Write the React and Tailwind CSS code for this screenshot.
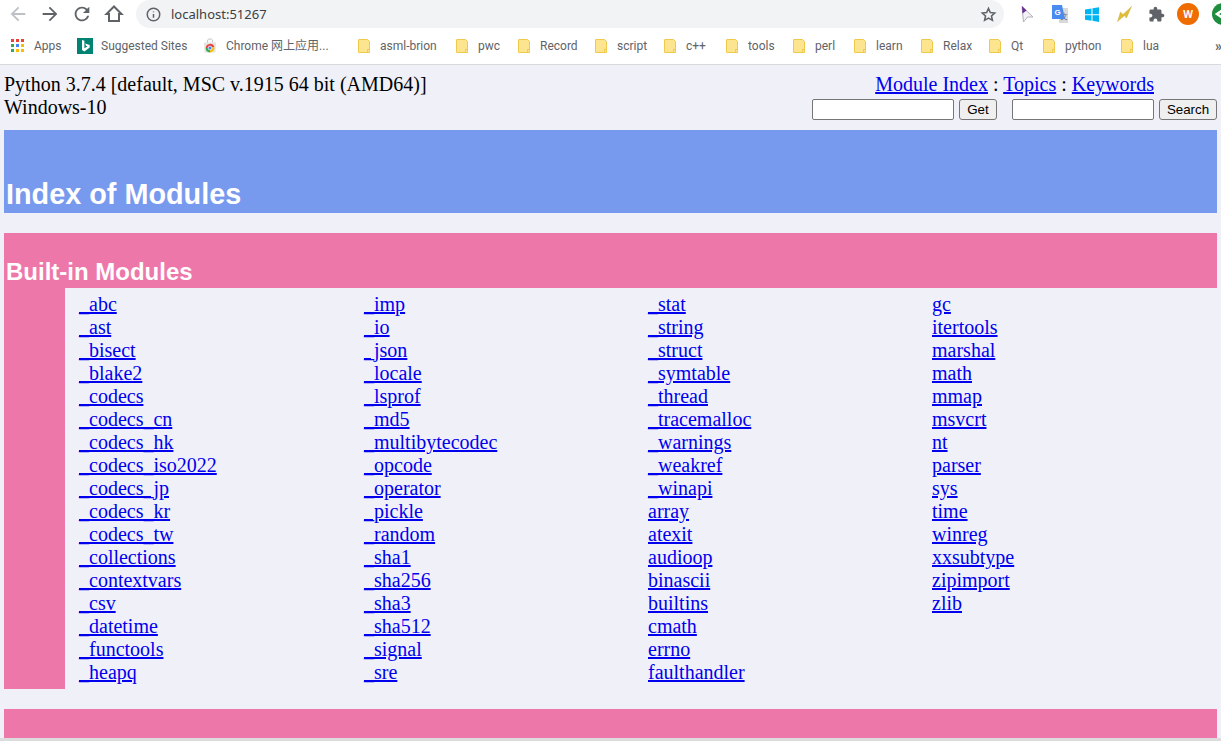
const bookmarks = [
  ['asml-brion', 'w-[98px]'],
  ['pwc', 'w-[62px]'],
  ['Record', 'w-[77px]'],
  ['script', 'w-[69px]'],
  ['c++', 'w-[62px]'],
  ['tools', 'w-[67px]'],
  ['perl', 'w-[61px]'],
  ['learn', 'w-[67px]'],
  ['Relax', 'w-[68px]'],
  ['Qt', 'w-[54px]'],
  ['python', 'w-[78px]'],
  ['lua', 'w-[60px]'],
];

const columns = [
  { w: 'w-[285px]', items: ['_abc', '_ast', '_bisect', '_blake2', '_codecs', '_codecs_cn', '_codecs_hk', '_codecs_iso2022', '_codecs_jp', '_codecs_kr', '_codecs_tw', '_collections', '_contextvars', '_csv', '_datetime', '_functools', '_heapq'] },
  { w: 'w-[284px]', items: ['_imp', '_io', '_json', '_locale', '_lsprof', '_md5', '_multibytecodec', '_opcode', '_operator', '_pickle', '_random', '_sha1', '_sha256', '_sha3', '_sha512', '_signal', '_sre'] },
  { w: 'w-[284px]', items: ['_stat', '_string', '_struct', '_symtable', '_thread', '_tracemalloc', '_warnings', '_weakref', '_winapi', 'array', 'atexit', 'audioop', 'binascii', 'builtins', 'cmath', 'errno', 'faulthandler'] },
  { w: 'w-[270px]', items: ['gc', 'itertools', 'marshal', 'math', 'mmap', 'msvcrt', 'nt', 'parser', 'sys', 'time', 'winreg', 'xxsubtype', 'zipimport', 'zlib'] },
];

const NavIcon = ({ d, className }) => (
  <svg width="22" height="22" viewBox="0 0 24 24" fill="currentColor" className={`shrink-0 ${className}`}>
    <path d={d} />
  </svg>
);

const HomeIcon = () => (
  <svg width="22" height="22" viewBox="0 0 22 22" className="shrink-0 ml-[10px] mt-[3px]">
    <path d="M11 3.500 L3.500 11 H6 V18 H16 V11 H18.500 Z" fill="none" stroke="#5f6368" strokeWidth="2" strokeLinejoin="miter" />
  </svg>
);

const Folder = () => (
  <svg width="12" height="14" viewBox="0 0 12 14" className="shrink-0">
    <path d="M1 .5h8.500l2 2v11H1a.5.5 0 0 1-.5-.5V1A.5.5 0 0 1 1 .5z" fill="#fde58f" stroke="#efc94c" />
    <rect x="9.500" y="10.500" width="2" height="3" fill="#fde58f" stroke="#efc94c" strokeWidth="0.8" />
  </svg>
);

const AppsIcon = () => {
  const dots = ['#ea4335', '#ea4335', '#ea4335', '#34a853', '#4285f4', '#fbbc05', '#34a853', '#fbbc05', '#fbbc05'];
  return (
    <svg width="13" height="13" viewBox="0 0 13 13">
      {dots.map((c, i) => (
        <rect key={i} x={(i % 3) * 5} y={Math.floor(i / 3) * 5} width="3" height="3" fill={c} />
      ))}
    </svg>
  );
};

const BingIcon = () => (
  <svg width="16" height="16" viewBox="0 0 16 16" className="shrink-0">
    <rect width="16" height="16" fill="#008373" />
    <path d="M5 2l2.400.8v7.400l3-1.700-1.400-.7-.9-2.300 4.600 1.600v2.500L7.400 13.500 5 12.100z" fill="#fff" />
  </svg>
);

const StoreIcon = () => (
  <svg width="14" height="15" viewBox="0 0 14 15" className="shrink-0">
    <path d="M1 4.500h12l-.5 10h-11z" fill="#e4e4e4" />
    <path d="M4.500 4.500V2.500C4.500 1.500 5.500 1 7 1s2.500.5 2.500 1.500V4.500" fill="none" stroke="#c4c4c4" />
    <path d="M7 10 L2.700 10 A4.400 4.400 0 0 1 11.300 9 Z" fill="#ea4335" />
    <path d="M7 10 L11.300 9 A4.400 4.400 0 0 1 7 14.400 Z" fill="#fbbc05" />
    <path d="M7 10 L7 14.400 A4.400 4.400 0 0 1 2.700 10 Z" fill="#34a853" />
    <circle cx="7" cy="10" r="1.900" fill="#4285f4" stroke="#fff" strokeWidth="0.7" />
  </svg>
);

const ExtensionIcons = () => (
  <div className="flex items-center">
    <svg width="16" height="18" viewBox="0 0 16 18" className="shrink-0 ml-[1px]">
      <path d="M3 1.500 L14 12 L8.500 12 L4.500 17z" fill="#f3f2f6" stroke="#b4b1bb" />
      <path d="M3 1 L7.500 5.500 L3.500 8.500z" fill="#6a2c91" />
    </svg>
    <svg width="16" height="18" viewBox="0 0 16 18" className="shrink-0 ml-[17px]">
      <rect x="7" y="3" width="9" height="15" fill="#d9d9d9" />
      <text x="12" y="14" fontSize="7" textAnchor="middle" fill="#666" fontFamily="'Noto Sans CJK SC', sans-serif">文</text>
      <path d="M0 0h10l3 14H0z" fill="#4a8bf0" />
      <text x="5.500" y="10" fontSize="8" fontWeight="700" textAnchor="middle" fill="#fff" fontFamily="'Liberation Sans', sans-serif">G</text>
    </svg>
    <svg width="14" height="15" viewBox="0 0 14 15" className="shrink-0 ml-[17px]">
      <path d="M0 2.500l6.500-1v5.700H0zM7.500 1.300L14 .2v7H7.500zM0 8.200h6.500v5.500l-6.500-1zM7.500 8.200H14v6.800l-6.500-1.200z" fill="#00b4f1" />
    </svg>
    <svg width="16" height="16" viewBox="0 0 16 16" className="shrink-0 ml-[17px]">
      <path d="M15.500 .500 L10.500 12 L8.500 9.500 L1.500 15.500 L4.500 6 L7 8.500 Z" fill="#e2bd2f" stroke="#c9b35a" strokeWidth="0.5" />
    </svg>
    <svg width="17" height="17" viewBox="0 0 24 24" fill="#5f6368" className="shrink-0 ml-[16px]">
      <path d="M20.500 11H19V7c0-1.100-.9-2-2-2h-4V3.500C13 2.120 11.880 1 10.500 1S8 2.120 8 3.500V5H4c-1.100 0-1.990.9-1.990 2v3.800H3.500c1.490 0 2.700 1.210 2.700 2.700s-1.210 2.700-2.700 2.700H2V20c0 1.100.9 2 2 2h3.800v-1.500c0-1.490 1.210-2.700 2.700-2.700 1.490 0 2.700 1.210 2.700 2.700V22H17c1.100 0 2-.9 2-2v-4h1.500c1.380 0 2.500-1.120 2.500-2.500S21.880 11 20.500 11z" />
    </svg>
    <div className="shrink-0 ml-[12px] w-[22px] h-[22px] rounded-full bg-[#ef6c00] flex items-center justify-center text-white text-[10px] font-bold">W</div>
    <svg width="11" height="22" viewBox="0 0 11 22" className="shrink-0 ml-[13px]">
      <circle cx="11" cy="11" r="11" fill="#1e8e3e" />
      <path d="M11 7 L5 11 L11 15" fill="none" stroke="#fff" strokeWidth="2.500" />
    </svg>
  </div>
);

export default function App() {
  return (
    <div className="w-[1221px] h-[741px] overflow-hidden bg-[#f0f0f8] font-['Liberation_Serif',serif]">
      {/* chrome toolbar */}
      <div className="h-[65px] bg-white border-b border-[#d9dadc] font-['Noto_Sans','Noto_Sans_CJK_SC',sans-serif] text-[#5f6368]">
        <div className="h-[33px] flex items-start">
          <NavIcon d="M20 11H7.830l5.590-5.590L12 4l-8 8 8 8 1.410-1.410L7.830 13H20v-2z" className="text-[#bdc1c6] ml-[7px] mt-[3px]" />
          <NavIcon d="M12 4l-1.410 1.410L16.170 11H4v2h12.170l-5.580 5.590L12 20l8-8z" className="ml-[10px] mt-[3px]" />
          <NavIcon d="M17.650 6.350A7.958 7.958 0 0 0 12 4c-4.420 0-7.990 3.580-7.990 8s3.570 8 7.990 8c3.730 0 6.840-2.550 7.730-6h-2.080A5.990 5.990 0 0 1 12 18c-3.310 0-6-2.690-6-6s2.690-6 6-6c1.660 0 3.140.69 4.220 1.780L13 11h7V4l-2.350 2.350z" className="ml-[10px] mt-[3px]" />
          <HomeIcon />
          <div className="shrink-0 ml-[11px] w-[868px] h-[28px] bg-[#f1f3f4] rounded-full flex items-center pl-[10px] pr-[7px]">
            <svg width="15" height="15" viewBox="0 0 24 24" fill="none" stroke="#5f6368" strokeWidth="2.400">
              <circle cx="12" cy="12" r="10" />
              <path d="M12 11v6M12 7v1.500" />
            </svg>
            <span className="ml-[10px] text-[13px] text-[#3c4043] leading-none">localhost:51267</span>
            <svg width="17" height="17" viewBox="0 0 24 24" fill="none" stroke="#5f6368" strokeWidth="2.200" className="ml-auto">
              <path d="M12 3.500l2.600 5.700 6.200.7-4.600 4.200 1.300 6.100L12 17.100l-5.500 3.100 1.300-6.100-4.600-4.200 6.200-.7z" />
            </svg>
          </div>
          <div className="shrink-0 ml-[14px] mt-[3px]">
            <ExtensionIcons />
          </div>
        </div>
        <div className="h-[25px] flex items-center whitespace-nowrap font-['Roboto','Noto_Sans_CJK_SC',sans-serif] text-[12px] leading-none text-[#5f6368]">
          <div className="shrink-0 ml-[11px] w-[23px] h-[13px]"><AppsIcon /></div>
          <span className="shrink-0 w-[43px]">Apps</span>
          <BingIcon />
          <span className="shrink-0 ml-[8px] w-[102px]">Suggested Sites</span>
          <StoreIcon />
          <span className="shrink-0 ml-[9px] w-[132px]">Chrome 网上应用...</span>
          {bookmarks.map(([name, w]) => (
            <div key={name} className={`flex items-center shrink-0 ${w}`}>
              <Folder />
              <span className="ml-[10px]">{name}</span>
            </div>
          ))}
          <span className="ml-[34px] text-[14px] font-bold shrink-0">»</span>
        </div>
      </div>

      {/* page */}
      <div className="px-[4px] pt-[8px] text-[20px] leading-[23px] text-black">
        <div className="flex justify-between h-[57px]">
          <div>
            <div>Python 3.7.4 [default, MSC v.1915 64 bit (AMD64)]</div>
            <div>Windows-10</div>
          </div>
          <div className="flex flex-col items-end">
            <div className="mr-[63px]">
              <a href="#" className="text-[#0000ee] underline">Module Index</a> : <a href="#" className="text-[#0000ee] underline">Topics</a> : <a href="#" className="text-[#0000ee] underline">Keywords</a>
            </div>
            <div className="flex items-center mt-[3px] font-['Liberation_Sans',sans-serif] text-[13.33px]">
              <input className="w-[142px] h-[21px] bg-white border border-[#767676] rounded-[2px]" />
              <button className="ml-[5px] w-[38px] h-[21px] bg-[#efefef] border border-[#767676] rounded-[3px] leading-none">Get</button>
              <input className="ml-[15px] w-[142px] h-[21px] bg-white border border-[#767676] rounded-[2px]" />
              <button className="ml-[5px] w-[58px] h-[21px] bg-[#efefef] border border-[#767676] rounded-[3px] leading-none">Search</button>
            </div>
          </div>
        </div>

        <div className="h-[83px] bg-[#7799ee] flex items-end px-[2px] pb-[3px]">
          <h1 className="text-white font-bold text-[28.8px] leading-[32px] font-['Liberation_Sans',sans-serif]">Index of Modules</h1>
        </div>

        <div className="mt-[20px] h-[55px] bg-[#ee77aa] flex items-end px-[2px] pb-[3px]">
          <h2 className="text-white font-bold text-[24px] leading-[26px] font-['Liberation_Sans',sans-serif]">Built-in Modules</h2>
        </div>
        <div className="flex h-[401px]">
          <div className="w-[61px] bg-[#ee77aa]" />
          <div className="flex pl-[14px] pt-[5px]">
            {columns.map((col) => (
              <div key={col.items[0]} className={col.w}>
                {col.items.map((m) => (
                  <div key={m}>
                    <a href="#" className="text-[#0000ee] underline">{m}</a>
                  </div>
                ))}
              </div>
            ))}
          </div>
        </div>

        <div className="mt-[20px] h-[29px] bg-[#ee77aa]" />
      </div>
      <div className="h-[3px] bg-[#dcdcdc]" />
    </div>
  );
}
